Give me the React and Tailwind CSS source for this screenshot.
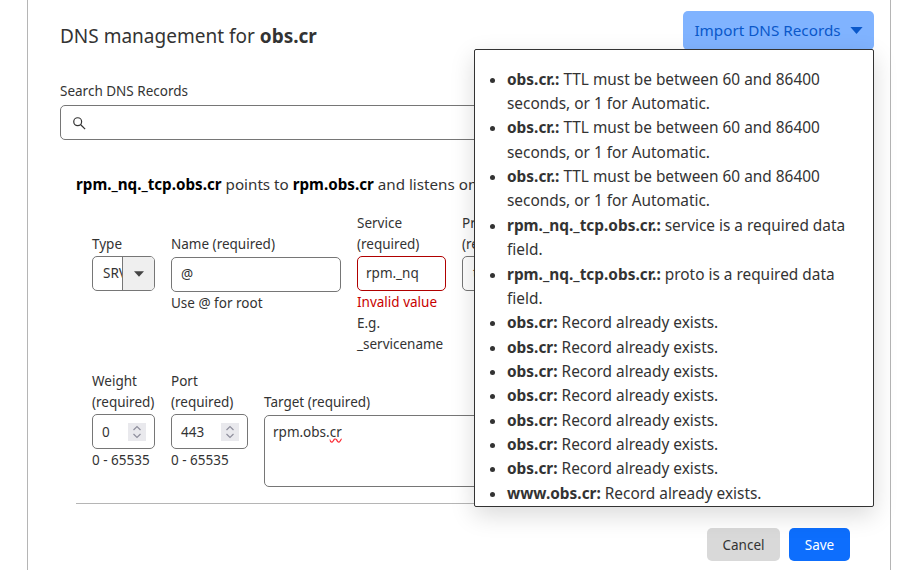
import React from "react";

const FONT = "font-['Noto_Sans',sans-serif]";

const errors = [
  ["obs.cr.:", "TTL must be between 60 and 86400 seconds, or 1 for Automatic."],
  ["obs.cr.:", "TTL must be between 60 and 86400 seconds, or 1 for Automatic."],
  ["obs.cr.:", "TTL must be between 60 and 86400 seconds, or 1 for Automatic."],
  ["rpm._nq._tcp.obs.cr.:", "service is a required data field."],
  ["rpm._nq._tcp.obs.cr.:", "proto is a required data field."],
  ["obs.cr:", "Record already exists."],
  ["obs.cr:", "Record already exists."],
  ["obs.cr:", "Record already exists."],
  ["obs.cr:", "Record already exists."],
  ["obs.cr:", "Record already exists."],
  ["obs.cr:", "Record already exists."],
  ["obs.cr:", "Record already exists."],
  ["www.obs.cr:", "Record already exists."],
];

const Caret = ({ className }) => (
  <svg viewBox="0 0 14 8" className={className} fill="currentColor">
    <path d="M0 0h14L7 8z" />
  </svg>
);

const Spinner = () => (
  <div className="w-[18px] h-[18px] bg-[#e9e9ed] flex items-center justify-center shrink-0">
    <svg viewBox="0 0 18 18" className="w-[18px] h-[18px]" fill="none" stroke="#8f8f9d" strokeWidth="1.2">
      <path d="M5.5 7 9 3.5 12.5 7M5.5 11 9 14.5 12.5 11" />
    </svg>
  </div>
);

const Label = ({ children, className = "" }) => (
  <div className={`h-[42px] flex items-end leading-[21px] ${className}`}>
    <span>{children}</span>
  </div>
);

const NumberField = ({ label, value, width }) => (
  <div className={`${width} shrink-0`}>
    <Label>{label}</Label>
    <div className="h-[35px] border border-[#767676] rounded-[5px] flex items-center justify-between pl-[9px] pr-[8px] mt-px">
      <span className="pt-px">{value}</span>
      <Spinner />
    </div>
    <p className="leading-[21px] mt-px">0 - 65535</p>
  </div>
);

export default function App() {
  return (
    <div className={`${FONT} relative h-[570px] w-[915px] overflow-hidden bg-white text-[13.5px] text-[#333]`}>
      <div className="ml-[27px] w-[864px] h-[570px] border-x border-[#b5b5b5] pl-[32px] pr-[16px] pt-[11px]">
        <div className="flex justify-between items-start h-[39px]">
          <h1 className="text-[19px] leading-[30px] mt-[10px] text-[#333]">
            DNS management for <b>obs.cr</b>
          </h1>
          <button className="h-[39px] w-[191px] bg-[#80b3ff] text-[#0a58ca] rounded-[5px] text-[15.25px] flex items-center justify-center gap-[9px]">
            Import DNS Records
            <Caret className="w-[13px] h-[7px]" />
          </button>
        </div>

        <label className="block mt-[31px] leading-[21px]">Search DNS Records</label>
        <div className="mt-[3px] h-[35px] border border-[#767676] rounded-[5px] flex items-center pl-[11px]">
          <svg viewBox="0 0 16 16" className="w-[14px] h-[14px]" fill="none" stroke="#333" strokeWidth="1.4">
            <circle cx="6.5" cy="6.5" r="4.5" />
            <path d="m10 10 5 5" />
          </svg>
        </div>

        <div className="ml-[16px] mr-[16px]">
          <p className="mt-[33px] text-[15.2px] leading-[22px] text-[#333] whitespace-nowrap">
            <b className="text-black">rpm._nq._tcp.obs.cr</b> points to <b className="text-black">rpm.obs.cr</b> and listens on _tcp port 443
          </p>

          <div className="flex gap-[16px] pl-[16px] mt-[18px] h-[158px]">
            <div className="w-[63px] shrink-0">
              <Label>Type</Label>
              <div className="h-[35px] border border-[#767676] rounded-[5px] flex overflow-hidden mt-px">
                <span className="w-[29px] pl-[10px] leading-[33px] overflow-hidden shrink-0">SRV</span>
                <div className="flex-1 bg-[#efefef] border-l border-[#767676] flex items-center justify-center">
                  <Caret className="w-[10px] h-[6px] text-[#444]" />
                </div>
              </div>
            </div>
            <div className="w-[170px] shrink-0">
              <Label>Name (required)</Label>
              <div className="h-[35px] border border-[#767676] rounded-[5px] flex items-center pl-[9px] mt-[2px]">@</div>
              <p className="leading-[21px] mt-px">Use @ for root</p>
            </div>
            <div className="w-[89px] shrink-0">
              <Label>Service (required)</Label>
              <div className="h-[35px] border border-[#b00000] rounded-[5px] flex items-center pl-[8px] mt-px">rpm._nq</div>
              <p className="leading-[21px] mt-px text-[#c80000]">Invalid value</p>
              <p className="leading-[21px]">E.g. _servicename</p>
            </div>
            <div className="w-[89px] shrink-0">
              <Label>Protocol (required)</Label>
              <div className="h-[35px] border border-[#767676] rounded-[5px] flex items-center pl-[10px] mt-px">tcp</div>
            </div>
          </div>

          <div className="flex gap-[16px] pl-[16px] h-[132px]">
            <NumberField label="Weight (required)" value="0" width="w-[63px]" />
            <NumberField label="Port (required)" value="443" width="w-[77px]" />
            <div className="flex-1">
              <Label>Target (required)</Label>
              <div className="h-[72px] border border-[#767676] rounded-[5px] px-[8px] pt-[6px] leading-[21px] mt-[2px]">
                rpm.obs.<span className="underline decoration-wavy decoration-red-500">cr</span>
              </div>
            </div>
          </div>

          <div className="border-t border-[#b5b5b5]" />

          <div className="flex justify-end gap-[9px] mt-[24px] mr-[8px]">
            <button className="w-[73px] h-[33px] pt-px bg-[#d9d9d9] text-[#333] rounded-[5px]">Cancel</button>
            <button className="w-[61px] h-[33px] pt-px bg-[#0d6efd] text-white rounded-[5px]">Save</button>
          </div>
        </div>
      </div>

      {/* dropdown with the import errors */}
      <div className="absolute left-[474px] top-[49px] w-[400px] h-[458px] bg-white border border-[#333] rounded-[2px] overflow-hidden shadow-[0_8px_24px_rgba(0,0,0,0.15)]">
        <ul className="list-disc pl-[32px] pr-[16px] pt-[17.7px] text-[15.4px] leading-[24.36px] text-[#333]">
          {errors.map(([name, message], i) => (
            <li key={i}>
              <b>{name}</b> {message}
            </li>
          ))}
        </ul>
      </div>
    </div>
  );
}
